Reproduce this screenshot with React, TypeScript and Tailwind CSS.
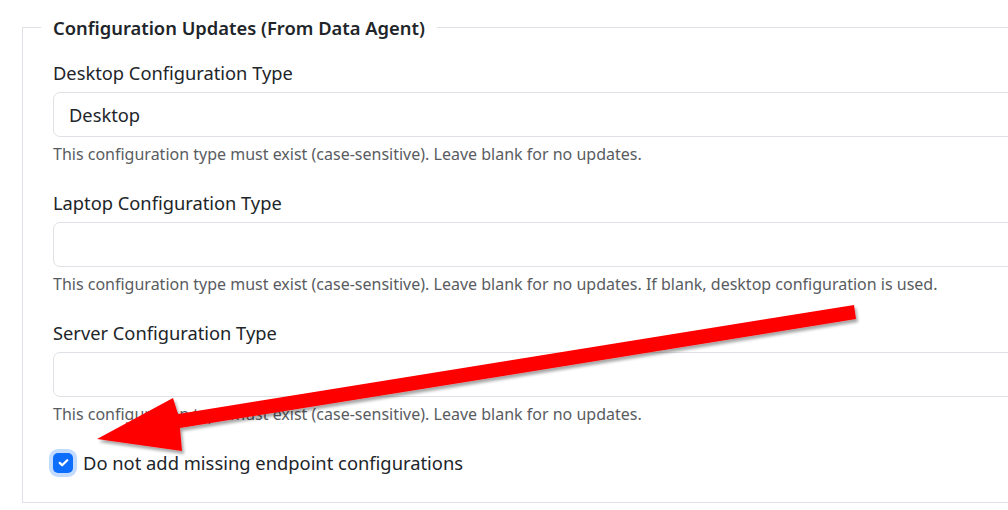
import React from 'react';

const groups = [
  {
    id: 'desktop',
    label: 'Desktop Configuration Type',
    value: 'Desktop',
    help: 'This configuration type must exist (case-sensitive). Leave blank for no updates.',
  },
  {
    id: 'laptop',
    label: 'Laptop Configuration Type',
    value: '',
    help: 'This configuration type must exist (case-sensitive). Leave blank for no updates. If blank, desktop configuration is used.',
  },
  {
    id: 'server',
    label: 'Server Configuration Type',
    value: '',
    help: 'This configuration type must exist (case-sensitive). Leave blank for no updates.',
  },
];

function Arrow() {
  return (
    <svg className="absolute inset-0 pointer-events-none" width={1008} height={510} viewBox="0 0 1008 510">
      <defs>
        <filter id="arrowShadow" x="-10%" y="-10%" width="120%" height="140%">
          <feDropShadow dx="2" dy="3" stdDeviation="1.6" floodColor="#000" floodOpacity="0.35" />
        </filter>
      </defs>
      <polygon
        points="97,439 173,398 178,414 854,305 856,319 180,428 182,451"
        fill="#ff0000"
        filter="url(#arrowShadow)"
      />
    </svg>
  );
}

export default function App() {
  return (
    <div className="relative w-[1008px] h-[510px] overflow-hidden bg-white font-['Noto_Sans',sans-serif] text-[#212529]">
      <fieldset className="ml-[22px] mt-[14px] w-[1040px] border border-[#dee2e6] px-[18px] pb-[26px]">
        <legend className="px-3 text-[18.35px] leading-[27px] font-semibold">Configuration Updates (From Data Agent)</legend>
        <div className="px-3 pt-[18px]">
          {groups.map((g) => (
            <div key={g.id} className="mb-[23px]">
              <label htmlFor={g.id} className="block mb-[6px] text-[18.3px] leading-[27px]">
                {g.label}
              </label>
              <input
                id={g.id}
                readOnly
                defaultValue={g.value}
                className="block w-full h-[45px] border border-[#dee2e6] rounded-[7px] px-[15px] text-[18.3px] text-[#212529] bg-white outline-none"
              />
              <div className="mt-[5px] text-[16px] leading-[24px] text-[#595c5f]">{g.help}</div>
            </div>
          ))}
          <div className="flex items-center gap-[10px] h-[27px]">
            <span className="flex items-center justify-center w-[20px] h-[20px] rounded-[5px] bg-[#0d6efd] ring-4 ring-[#0d6efd]/25">
              <svg width="15" height="15" viewBox="0 0 20 20" fill="none">
                <path d="m5 10.5 3.2 3.2 6.8-6.8" stroke="#fff" strokeWidth="3" strokeLinecap="round" strokeLinejoin="round" />
              </svg>
            </span>
            <span className="text-[18.35px] leading-[27px]">Do not add missing endpoint configurations</span>
          </div>
        </div>
      </fieldset>
      <Arrow />
    </div>
  );
}
